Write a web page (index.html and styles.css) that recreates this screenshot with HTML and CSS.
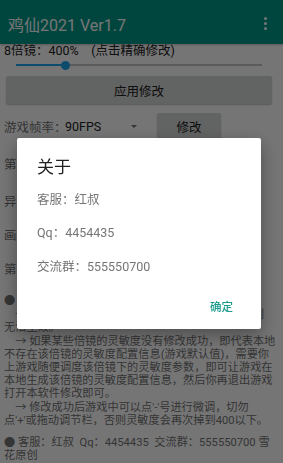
FILE: index.html
```html
<!DOCTYPE html>
<html lang="zh-CN">
<head>
<meta charset="utf-8">
<title>鸡仙2021 Ver1.7</title>
<link rel="stylesheet" href="styles.css">
</head>
<body>
<header class="appbar">
  <h1 class="title">鸡仙2021 Ver1.7</h1>
  <span class="overflow"><i></i><i></i><i></i></span>
</header>
<main class="content">
  <div class="zoom-label">8倍镜：400%    (点击精确修改)</div>
  <div class="slider">
    <div class="track">
      <div class="fill" style="width:49px"></div>
      <div class="thumb"></div>
    </div>
  </div>
  <div class="btn btn-apply">应用修改</div>

  <div class="row row-fps">
    <span class="label">游戏帧率：</span>
    <span class="spinner"><span class="spinner-text">90FPS</span><span class="caret"></span></span>
    <span class="btn btn-small">修改</span>
  </div>
  <div class="row row-2"><span class="label">第三</span></div>
  <div class="row row-3"><span class="label">异常</span></div>
  <div class="row row-4"><span class="label">画质</span></div>
  <div class="row row-5"><span class="label">第一</span></div>

  <p class="notes">
    <span class="cjk">●</span> 说明<br>
    <span class="cjk">　→</span> 修改前请先彻底关闭游戏并授予存储权限，否则<br>
    无法生效。<br>
    <span class="cjk">　→</span> 如果某些倍镜的灵敏度没有修改成功，即代表本地<br>
    不存在该倍镜的灵敏度配置信息(游戏默认值)，需要你<br>
    上游戏随便调度该倍镜下的灵敏度参数，即可让游戏在<br>
    本地生成该倍镜的灵敏度配置信息，然后你再退出游戏<br>
    打开本软件修改即可。<br>
    <span class="cjk">　→</span> 修改成功后游戏中可以点'-'号进行微调，切勿<br>
    点'+'或拖动调节栏，否则灵敏度会再次掉到400以下。
  </p>
  <p class="notes notes-contact"><span class="cjk">●</span> 客服：红叔&nbsp; Qq：4454435&nbsp; 交流群：555550700 雪花原创</p>
</main>

<div class="scrim"></div>

<section class="dialog">
  <h2 class="dialog-title">关于</h2>
  <p class="dialog-msg">客服：红叔<br><br>Qq：4454435<br><br>交流群：555550700</p>
  <div class="dialog-actions">
    <span class="dialog-btn">确定</span>
  </div>
</section>
</body>
</html>
```

FILE: styles.css
```css
* {
  box-sizing: border-box;
  margin: 0;
  padding: 0;
}

html,
body {
  width: 283px;
  height: 463px;
  overflow: hidden;
}

body {
  background: #ffffff;
  font-family: Roboto, "Noto Sans CJK SC", sans-serif;
  color: #212121;
}

.cjk {
  font-family: "Noto Sans CJK SC", sans-serif;
}

/* App bar */
.appbar {
  height: 44px;
  background: #009a8a;
  display: flex;
  align-items: center;
  padding: 3px 0 0 8px;
  box-shadow: 0 1px 2px rgba(0, 0, 0, 0.25);
}

.title {
  flex: 1;
  font-size: 16px;
  font-weight: 400;
  color: #ffffff;
}

.overflow {
  display: flex;
  flex-direction: column;
  gap: 1.8px;
  margin-right: 16px;
}

.overflow i {
  display: block;
  width: 3px;
  height: 3px;
  border-radius: 50%;
  background: #ffffff;
}

/* Content */
.content {
  padding: 0 4px;
}

.zoom-label {
  font-size: 12.5px;
  line-height: 14px;
  color: #212121;
  white-space: pre;
}

.slider {
  height: 14px;
  display: flex;
  align-items: center;
  padding: 0 17px 0 12px;
}

.track {
  flex: 1;
  height: 2px;
  display: flex;
  align-items: center;
  background: #c4c4c4;
}

.fill {
  height: 2px;
  background: #1ea6ee;
  flex: none;
}

.thumb {
  flex: none;
  width: 9px;
  height: 9px;
  margin: 0 -4.5px;
  border-radius: 50%;
  background: #1ea6ee;
}

.btn {
  display: flex;
  align-items: center;
  justify-content: center;
  background: #d6d7d7;
  border-radius: 2px;
  box-shadow: 0 1px 1.5px rgba(0, 0, 0, 0.25);
  font-size: 12.5px;
  color: #212121;
}

.btn-apply {
  height: 28px;
  margin: 4px 7px 0 2px;
}

.row {
  display: flex;
  align-items: center;
  height: 36px;
  font-size: 12.5px;
  color: #737373;
}

.row-fps {
  margin-top: 4px;
}

.row-2 {
  height: 38px;
}

.row-4 {
  height: 32px;
}

.spinner {
  display: flex;
  align-items: center;
  width: 78px;
  margin-left: -1.5px;
  color: #212121;
}

.caret {
  margin-left: auto;
  margin-right: 6px;
  width: 0;
  height: 0;
  border-left: 3.5px solid transparent;
  border-right: 3.5px solid transparent;
  border-top: 3.5px solid #737373;
}

.btn-small {
  width: 64px;
  height: 26px;
  margin-left: 14px;
}

.notes {
  margin-top: 7px;
  font-size: 11.2px;
  line-height: 13px;
  color: #737373;
}

.notes-contact {
  margin-top: 8px;
}

/* Dim layer + dialog */
.scrim {
  position: fixed;
  inset: 0;
  background: rgba(0, 0, 0, 0.54);
}

.dialog {
  position: fixed;
  left: 17px;
  top: 138px;
  width: 244px;
  height: 191px;
  display: flex;
  flex-direction: column;
  padding: 19px 20px 8px;
  background: #ffffff;
  border-radius: 2px;
  box-shadow: 0 6px 18px rgba(0, 0, 0, 0.35);
}

.dialog-title {
  font-size: 17px;
  line-height: 20px;
  font-weight: 400;
  color: #212121;
}

.dialog-msg {
  margin-top: 14.6px;
  font-size: 12.5px;
  line-height: 16.8px;
  color: #757575;
}

.dialog-actions {
  margin-top: auto;
  display: flex;
  justify-content: flex-end;
}

.dialog-btn {
  height: 30px;
  padding: 0 8px;
  display: flex;
  align-items: center;
  font-size: 11.5px;
  font-weight: 500;
  color: #1d9c8e;
}
```
